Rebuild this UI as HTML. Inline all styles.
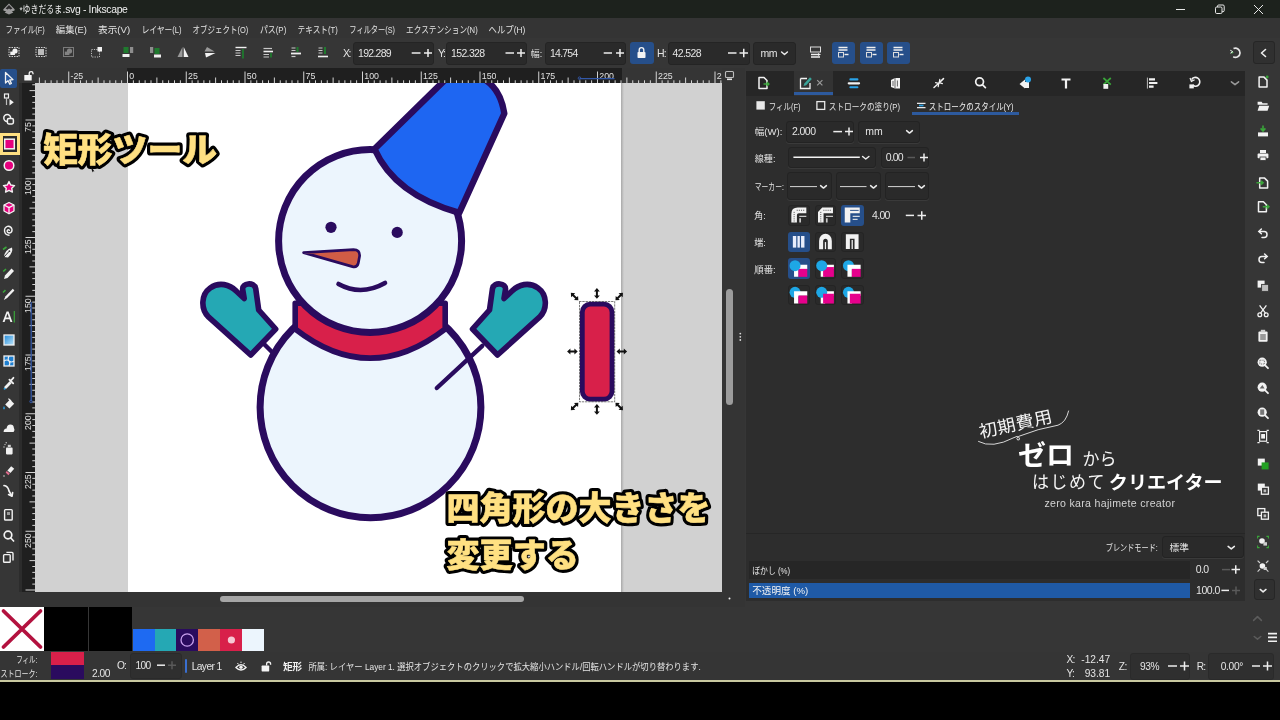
<!DOCTYPE html>
<html lang="ja"><head><meta charset="utf-8"><title>*ゆきだるま.svg - Inkscape</title>
<style>
html,body{margin:0;padding:0;background:#000;}
body{width:1280px;height:720px;overflow:hidden;position:relative;font-family:"Liberation Sans", sans-serif;}
#app{position:absolute;left:0;top:0;width:1280px;height:720px;overflow:hidden;background:#363636;opacity:0.9999;-webkit-font-smoothing:antialiased;filter:blur(0.45px);}
#app div,#app span{position:absolute;box-sizing:border-box;}
#app svg{position:absolute;left:0;top:0;}
#app svg text{font-family:"Liberation Sans","Noto Sans CJK JP",sans-serif;}
</style></head><body>
<div id="app">
<div style="left:0px;top:0px;width:1280px;height:18px;background:#1d221d;"></div>
<div style="left:0px;top:18px;width:1280px;height:20px;background:#343434;"></div>
<div style="left:0px;top:38px;width:1280px;height:30px;background:#363636;"></div>
<div style="left:0px;top:68px;width:20px;height:539px;background:#363636;"></div>
<div style="left:20px;top:68px;width:702px;height:15px;background:#353535;"></div>
<div style="left:126.5px;top:68px;width:495px;height:15px;background:#1f1f1f;"></div>
<div style="left:19px;top:83px;width:3.5px;height:509px;background:#2c2c2c;"></div>
<div style="left:22px;top:83px;width:13px;height:509px;background:#1f1f1f;"></div>
<div style="left:20px;top:68px;width:15px;height:15px;background:#353535;"></div>
<div style="left:35px;top:83px;width:687px;height:509px;background:#d1d1d1;"></div>
<div style="left:128px;top:83px;width:493px;height:509px;background:#ffffff;"></div>
<div style="left:621px;top:83px;width:3px;height:509px;background:linear-gradient(90deg,#a9a9a9,#d1d1d1);"></div>
<div style="left:722px;top:68px;width:23px;height:539px;background:#343434;"></div>
<div style="left:726px;top:289px;width:7px;height:116px;background:#9c9c9c;border-radius:3.5px;"></div>
<div style="left:20px;top:592px;width:702px;height:15px;background:#343434;"></div>
<div style="left:220px;top:596px;width:304px;height:6px;background:#a6a6a6;border-radius:3px;"></div>
<div style="left:745.5px;top:70.5px;width:499px;height:530.5px;background:#2d2d2d;"></div>
<div style="left:745.5px;top:70.5px;width:499px;height:25px;background:#262626;"></div>
<div style="left:745.5px;top:533px;width:499px;height:1px;background:#262626;"></div>
<div style="left:1250px;top:68px;width:30px;height:620px;background:#363636;"></div>
<div style="left:0px;top:607px;width:1250px;height:45px;background:#363636;"></div>
<div style="left:0px;top:652px;width:1280px;height:28px;background:#353535;"></div>
<div style="left:0px;top:680px;width:1280px;height:2px;background:#c9c9a0;"></div>
<div style="left:0px;top:682px;width:1280px;height:38px;background:#000;"></div>
<svg width="1280" height="720" viewBox="0 0 1280 720"><defs><clipPath id="cvclip"><rect x="35" y="83" width="687" height="509"/></clipPath><filter id="soft" x="-5%" y="-20%" width="110%" height="140%"><feGaussianBlur stdDeviation="0.6"/></filter></defs><g clip-path="url(#cvclip)" stroke-linejoin="round" stroke-linecap="round"><path d="M262 342 L277 357" stroke="#2a0b5e" stroke-width="4.4" fill="none"/><circle cx="370.5" cy="407.3" r="110.4" fill="#ecf5fd" stroke="#2a0b5e" stroke-width="7"/><path d="M295.2 303.3 L295.2 329 Q370 387.4 445.2 329 L445.2 303.3 Z" fill="#d8204a" stroke="#2a0b5e" stroke-width="5.6"/><circle cx="370.1" cy="241" r="91.5" fill="#ecf5fd" stroke="#2a0b5e" stroke-width="7"/><path d="M374.5 149 L449 76 L478 76 Q500 85 504.3 113.5 L459.3 212.8 Q395 195 374.5 149 Z" fill="#1e66f2" stroke="#2a0b5e" stroke-width="6.4"/><circle cx="331" cy="227.3" r="5.6" fill="#2a0b5e"/><circle cx="397.2" cy="232.4" r="5.6" fill="#2a0b5e"/><path d="M303.6 252.6 L353.5 249.6 Q360 249.6 359.6 256 L358.2 263.4 Q357.2 267.6 352.5 266.6 Z" fill="#d05c45" stroke="#2a0b5e" stroke-width="2.7"/><path d="M338.5 284 Q361 296.5 385 283" fill="none" stroke="#2a0b5e" stroke-width="4.6"/><path d="M497.5 355 L539.5 317.2 C547.8 309 547.2 294.5 538 288 C529 281.5 518.5 284.5 512 291 L504 298.5 L505.5 289.5 C506.5 283 494 281.5 492.5 288.5 L489.5 310 L472.5 329 Z" fill="#25a8b4" stroke="#2a0b5e" stroke-width="5.6"/><g transform="translate(748.2 0) scale(-1 1)"><path d="M497.5 355 L539.5 317.2 C547.8 309 547.2 294.5 538 288 C529 281.5 518.5 284.5 512 291 L504 298.5 L505.5 289.5 C506.5 283 494 281.5 492.5 288.5 L489.5 310 L472.5 329 Z" fill="#25a8b4" stroke="#2a0b5e" stroke-width="5.6"/></g><path d="M482.3 345.8 L436.8 388" stroke="#2a0b5e" stroke-width="4.4" fill="none"/><rect x="582.3" y="304.2" width="29.7" height="95" rx="8" ry="8" fill="#d8204a" stroke="#2a0b5e" stroke-width="4.8"/><rect x="579.5" y="301.5" width="35.2" height="100.3" fill="none" stroke="#222" stroke-width="0.6" stroke-dasharray="1.6 1.6"/><g transform="translate(574.6 296.6) rotate(45)" fill="#111" stroke="none"><path d="M-5.3 0 L-2.0 -2.9 L-2.0 -1 L2.0 -1 L2.0 -2.9 L5.3 0 L2.0 2.9 L2.0 1 L-2.0 1 L-2.0 2.9 Z"/></g><g transform="translate(596.9 293.4) rotate(90)" fill="#111" stroke="none"><path d="M-5.3 0 L-2.0 -2.9 L-2.0 -1 L2.0 -1 L2.0 -2.9 L5.3 0 L2.0 2.9 L2.0 1 L-2.0 1 L-2.0 2.9 Z"/></g><g transform="translate(619.2 296.6) rotate(-45)" fill="#111" stroke="none"><path d="M-5.3 0 L-2.0 -2.9 L-2.0 -1 L2.0 -1 L2.0 -2.9 L5.3 0 L2.0 2.9 L2.0 1 L-2.0 1 L-2.0 2.9 Z"/></g><g transform="translate(572.4 351.5) rotate(0)" fill="#111" stroke="none"><path d="M-5.3 0 L-2.0 -2.9 L-2.0 -1 L2.0 -1 L2.0 -2.9 L5.3 0 L2.0 2.9 L2.0 1 L-2.0 1 L-2.0 2.9 Z"/></g><g transform="translate(621.8 351.5) rotate(0)" fill="#111" stroke="none"><path d="M-5.3 0 L-2.0 -2.9 L-2.0 -1 L2.0 -1 L2.0 -2.9 L5.3 0 L2.0 2.9 L2.0 1 L-2.0 1 L-2.0 2.9 Z"/></g><g transform="translate(574.6 406.4) rotate(-45)" fill="#111" stroke="none"><path d="M-5.3 0 L-2.0 -2.9 L-2.0 -1 L2.0 -1 L2.0 -2.9 L5.3 0 L2.0 2.9 L2.0 1 L-2.0 1 L-2.0 2.9 Z"/></g><g transform="translate(596.9 409.4) rotate(90)" fill="#111" stroke="none"><path d="M-5.3 0 L-2.0 -2.9 L-2.0 -1 L2.0 -1 L2.0 -2.9 L5.3 0 L2.0 2.9 L2.0 1 L-2.0 1 L-2.0 2.9 Z"/></g><g transform="translate(619.2 406.4) rotate(45)" fill="#111" stroke="none"><path d="M-5.3 0 L-2.0 -2.9 L-2.0 -1 L2.0 -1 L2.0 -2.9 L5.3 0 L2.0 2.9 L2.0 1 L-2.0 1 L-2.0 2.9 Z"/></g></g><text x="43" y="161.5" font-size="34" font-weight="900" textLength="174" lengthAdjust="spacingAndGlyphs" fill="#000" stroke="#000" stroke-width="6.8" stroke-linejoin="round" filter="url(#soft)">矩形ツール</text><text x="43" y="161.5" font-size="34" font-weight="900" textLength="174" lengthAdjust="spacingAndGlyphs" fill="#ffe082" stroke="#ffe082" stroke-width="0.5" stroke-linejoin="round">矩形ツール</text><text x="446.5" y="520" font-size="32.5" font-weight="900" textLength="264" lengthAdjust="spacingAndGlyphs" fill="#000" stroke="#000" stroke-width="6.8" stroke-linejoin="round" filter="url(#soft)">四角形の大きさを</text><text x="446.5" y="520" font-size="32.5" font-weight="900" textLength="264" lengthAdjust="spacingAndGlyphs" fill="#ffe082" stroke="#ffe082" stroke-width="0.5" stroke-linejoin="round">四角形の大きさを</text><text x="446.5" y="567" font-size="32.5" font-weight="900" textLength="132.5" lengthAdjust="spacingAndGlyphs" fill="#000" stroke="#000" stroke-width="6.8" stroke-linejoin="round" filter="url(#soft)">変更する</text><text x="446.5" y="567" font-size="32.5" font-weight="900" textLength="132.5" lengthAdjust="spacingAndGlyphs" fill="#ffe082" stroke="#ffe082" stroke-width="0.5" stroke-linejoin="round">変更する</text></svg>
<span style="left:62.6px;top:4px;font-size:10.4px;color:#f0f0f0;line-height:11px;white-space:nowrap;letter-spacing:-0.329px;">.svg - Inkscape</span>
<span style="left:343px;top:47px;font-size:10.5px;color:#e4e4e4;line-height:12px;white-space:nowrap;letter-spacing:-1.460px;">X:</span>
<div style="left:352.5px;top:41.5px;width:81.19999999999999px;height:23.5px;background:#2a2a2a;border-radius:3px;border:1px solid #242424;"></div>
<span style="left:358px;top:47px;font-size:10.5px;color:#e4e4e4;line-height:12px;white-space:nowrap;letter-spacing:-0.708px;">192.289</span>
<span style="left:438px;top:47px;font-size:10.5px;color:#e4e4e4;line-height:12px;white-space:nowrap;letter-spacing:-1.460px;">Y:</span>
<div style="left:445.5px;top:41.5px;width:81.5px;height:23.5px;background:#2a2a2a;border-radius:3px;border:1px solid #242424;"></div>
<span style="left:451px;top:47px;font-size:10.5px;color:#e4e4e4;line-height:12px;white-space:nowrap;letter-spacing:-0.636px;">152.328</span>
<div style="left:544.5px;top:41.5px;width:81.5px;height:23.5px;background:#2a2a2a;border-radius:3px;border:1px solid #242424;"></div>
<span style="left:550px;top:47px;font-size:10.5px;color:#e4e4e4;line-height:12px;white-space:nowrap;letter-spacing:-0.769px;">14.754</span>
<div style="left:630px;top:41.7px;width:23.7px;height:22.6px;background:#264f8a;border-radius:3px;"></div>
<span style="left:657px;top:47px;font-size:10.5px;color:#e4e4e4;line-height:12px;white-space:nowrap;letter-spacing:-0.750px;">H:</span>
<div style="left:668px;top:41.5px;width:81.5px;height:23.5px;background:#2a2a2a;border-radius:3px;border:1px solid #242424;"></div>
<span style="left:672.5px;top:47px;font-size:10.5px;color:#e4e4e4;line-height:12px;white-space:nowrap;letter-spacing:-0.603px;">42.528</span>
<div style="left:753px;top:41.5px;width:43px;height:23.5px;background:#2a2a2a;border-radius:3px;border:1px solid #242424;"></div>
<span style="left:760.5px;top:47px;font-size:10.5px;color:#e4e4e4;line-height:12px;white-space:nowrap;letter-spacing:-0.497px;">mm</span>
<div style="left:832px;top:41.7px;width:22.6px;height:22.6px;background:#264f8a;border-radius:3px;"></div>
<div style="left:860px;top:41.7px;width:22.6px;height:22.6px;background:#264f8a;border-radius:3px;"></div>
<div style="left:887px;top:41.7px;width:22.6px;height:22.6px;background:#264f8a;border-radius:3px;"></div>
<div style="left:1252.5px;top:41px;width:22.5px;height:22.5px;background:#303030;border-radius:3px;border:1px solid #262626;"></div>
<span style="left:70.5px;top:71px;font-size:8.8px;color:#e0e0e0;line-height:10px;white-space:nowrap;">-25</span>
<span style="left:129.3px;top:71px;font-size:8.8px;color:#e0e0e0;line-height:10px;white-space:nowrap;">0</span>
<span style="left:188.1px;top:71px;font-size:8.8px;color:#e0e0e0;line-height:10px;white-space:nowrap;">25</span>
<span style="left:246.8px;top:71px;font-size:8.8px;color:#e0e0e0;line-height:10px;white-space:nowrap;">50</span>
<span style="left:305.6px;top:71px;font-size:8.8px;color:#e0e0e0;line-height:10px;white-space:nowrap;">75</span>
<span style="left:364.3px;top:71px;font-size:8.8px;color:#e0e0e0;line-height:10px;white-space:nowrap;">100</span>
<span style="left:423.1px;top:71px;font-size:8.8px;color:#e0e0e0;line-height:10px;white-space:nowrap;">125</span>
<span style="left:481.8px;top:71px;font-size:8.8px;color:#e0e0e0;line-height:10px;white-space:nowrap;">150</span>
<span style="left:540.5px;top:71px;font-size:8.8px;color:#e0e0e0;line-height:10px;white-space:nowrap;">175</span>
<span style="left:599.3px;top:71px;font-size:8.8px;color:#e0e0e0;line-height:10px;white-space:nowrap;">200</span>
<span style="left:658.0px;top:71px;font-size:8.8px;color:#e0e0e0;line-height:10px;white-space:nowrap;">225</span>
<span style="left:716.8px;top:71px;font-size:8.8px;color:#e0e0e0;line-height:10px;white-space:nowrap;">2</span>
<span style="left:24.4px;top:131.59px;font-size:8.8px;color:#e0e0e0;line-height:1;white-space:nowrap;transform-origin:0 0;transform:rotate(-90deg);">75</span>
<span style="left:24.4px;top:195.23px;font-size:8.8px;color:#e0e0e0;line-height:1;white-space:nowrap;transform-origin:0 0;transform:rotate(-90deg);">100</span>
<span style="left:24.4px;top:253.98px;font-size:8.8px;color:#e0e0e0;line-height:1;white-space:nowrap;transform-origin:0 0;transform:rotate(-90deg);">125</span>
<span style="left:24.4px;top:312.73px;font-size:8.8px;color:#e0e0e0;line-height:1;white-space:nowrap;transform-origin:0 0;transform:rotate(-90deg);">150</span>
<span style="left:24.4px;top:371.48px;font-size:8.8px;color:#e0e0e0;line-height:1;white-space:nowrap;transform-origin:0 0;transform:rotate(-90deg);">175</span>
<span style="left:24.4px;top:430.23px;font-size:8.8px;color:#e0e0e0;line-height:1;white-space:nowrap;transform-origin:0 0;transform:rotate(-90deg);">200</span>
<span style="left:24.4px;top:488.98px;font-size:8.8px;color:#e0e0e0;line-height:1;white-space:nowrap;transform-origin:0 0;transform:rotate(-90deg);">225</span>
<span style="left:24.4px;top:547.73px;font-size:8.8px;color:#e0e0e0;line-height:1;white-space:nowrap;transform-origin:0 0;transform:rotate(-90deg);">250</span>
<div style="left:0px;top:68.5px;width:16.5px;height:19.5px;background:#264f8a;border-radius:2px;"></div>
<div style="left:0px;top:133px;width:20px;height:22px;background:#2b2b2b;border:3px solid #ffe082;"></div>
<div style="left:793.7px;top:70.5px;width:39.5px;height:25px;background:#333333;"></div>
<div style="left:793.7px;top:91.6px;width:39.5px;height:3px;background:#2d5a9e;"></div>
<div style="left:912px;top:112px;width:106.8px;height:2.6px;background:#2d5a9e;"></div>
<div style="left:786.4px;top:120.5px;width:68.0px;height:22.5px;background:#2a2a2a;border-radius:3px;border:1px solid #232323;box-shadow:0 1px 0 #3a3a3a;"></div>
<span style="left:792px;top:125px;font-size:10.5px;color:#e4e4e4;line-height:12px;white-space:nowrap;letter-spacing:-0.575px;">2.000</span>
<div style="left:857.8px;top:120.5px;width:61.90000000000009px;height:22.5px;background:#2a2a2a;border-radius:3px;border:1px solid #232323;box-shadow:0 1px 0 #3a3a3a;"></div>
<span style="left:865.3px;top:125px;font-size:10.5px;color:#e4e4e4;line-height:12px;white-space:nowrap;letter-spacing:-0.147px;">mm</span>
<div style="left:788px;top:147px;width:87.5px;height:21px;background:#2a2a2a;border-radius:3px;border:1px solid #232323;box-shadow:0 1px 0 #3a3a3a;"></div>
<div style="left:881px;top:147px;width:48.39999999999998px;height:21px;background:#2a2a2a;border-radius:3px;border:1px solid #232323;box-shadow:0 1px 0 #3a3a3a;"></div>
<span style="left:885.8px;top:151px;font-size:10.5px;color:#e4e4e4;line-height:12px;white-space:nowrap;letter-spacing:-0.859px;">0.00</span>
<div style="left:787px;top:172px;width:45px;height:28px;background:#2a2a2a;border-radius:3px;border:1px solid #232323;box-shadow:0 1px 0 #3a3a3a;"></div>
<div style="left:836.4px;top:172px;width:44.200000000000045px;height:28px;background:#2a2a2a;border-radius:3px;border:1px solid #232323;box-shadow:0 1px 0 #3a3a3a;"></div>
<div style="left:884.8px;top:172px;width:44.200000000000045px;height:28px;background:#2a2a2a;border-radius:3px;border:1px solid #232323;box-shadow:0 1px 0 #3a3a3a;"></div>
<div style="left:788px;top:205px;width:21.700000000000045px;height:20.80000000000001px;background:#2a2a2a;border-radius:3px;border:1px solid #242424;"></div>
<div style="left:814.7px;top:205px;width:21.59999999999991px;height:20.80000000000001px;background:#2a2a2a;border-radius:3px;border:1px solid #242424;"></div>
<div style="left:840.8px;top:205px;width:22.90000000000009px;height:20.80000000000001px;background:#264f8a;border-radius:3px;"></div>
<span style="left:872px;top:209px;font-size:10.5px;color:#e4e4e4;line-height:12px;white-space:nowrap;letter-spacing:-0.684px;">4.00</span>
<div style="left:788px;top:231.7px;width:21.700000000000045px;height:20.80000000000001px;background:#264f8a;border-radius:3px;"></div>
<div style="left:814.7px;top:231.7px;width:21.59999999999991px;height:20.80000000000001px;background:#2a2a2a;border-radius:3px;border:1px solid #242424;"></div>
<div style="left:840.8px;top:231.7px;width:22.90000000000009px;height:20.80000000000001px;background:#2a2a2a;border-radius:3px;border:1px solid #242424;"></div>
<div style="left:788px;top:257.5px;width:21.700000000000045px;height:21.69999999999999px;background:#264f8a;border-radius:3px;"></div>
<div style="left:814.7px;top:257.5px;width:21.59999999999991px;height:21.69999999999999px;background:#2a2a2a;border-radius:3px;border:1px solid #242424;"></div>
<div style="left:840.8px;top:257.5px;width:22.90000000000009px;height:21.69999999999999px;background:#2a2a2a;border-radius:3px;border:1px solid #242424;"></div>
<div style="left:788px;top:284.7px;width:21.700000000000045px;height:20.69999999999999px;background:#2a2a2a;border-radius:3px;border:1px solid #242424;"></div>
<div style="left:814.7px;top:284.7px;width:21.59999999999991px;height:20.69999999999999px;background:#2a2a2a;border-radius:3px;border:1px solid #242424;"></div>
<div style="left:840.8px;top:284.7px;width:22.90000000000009px;height:20.69999999999999px;background:#2a2a2a;border-radius:3px;border:1px solid #242424;"></div>
<span style="left:1044.4px;top:497px;font-size:10.6px;color:#d4d4d4;line-height:12px;white-space:nowrap;letter-spacing:0.303px;">zero kara hajimete creator</span>
<div style="left:1162px;top:536px;width:81.59999999999991px;height:22.200000000000045px;background:#2a2a2a;border-radius:3px;border:1px solid #232323;box-shadow:0 1px 0 #3a3a3a;"></div>
<div style="left:749px;top:560.6px;width:441px;height:18.8px;background:#262626;"></div>
<span style="left:1195.8px;top:563px;font-size:10.5px;color:#e4e4e4;line-height:12px;white-space:nowrap;letter-spacing:-0.599px;">0.0</span>
<div style="left:749px;top:582.8px;width:441px;height:15.4px;background:#1f5aa6;"></div>
<span style="left:1196px;top:584px;font-size:10.5px;color:#e4e4e4;line-height:12px;white-space:nowrap;letter-spacing:-0.455px;">100.0</span>
<div style="left:1253.7px;top:579.4px;width:21.7px;height:20.8px;background:#303030;border-radius:3px;border:1px solid #262626;"></div>
<div style="left:0px;top:607px;width:44px;height:44px;background:#ffffff;"></div>
<div style="left:44.4px;top:607px;width:43.8px;height:44px;background:#000;"></div>
<div style="left:88.8px;top:607px;width:43.4px;height:44px;background:#000;"></div>
<div style="left:132.6px;top:629px;width:22.0px;height:22.2px;background:#1e6af2;"></div>
<div style="left:154.6px;top:629px;width:21.599999999999994px;height:22.2px;background:#25a8b4;"></div>
<div style="left:176.2px;top:629px;width:22.0px;height:22.2px;background:#2a0b5e;"></div>
<div style="left:198.2px;top:629px;width:22.200000000000017px;height:22.2px;background:#d2604a;"></div>
<div style="left:220.4px;top:629px;width:22.0px;height:22.2px;background:#d8204a;"></div>
<div style="left:242.4px;top:629px;width:21.799999999999983px;height:22.2px;background:#ecf5fd;"></div>
<div style="left:50.8px;top:652.4px;width:33.4px;height:13px;background:#d8204a;"></div>
<div style="left:50.8px;top:665.4px;width:33.4px;height:13.8px;background:#2a0b5e;"></div>
<span style="left:92px;top:668px;font-size:10.2px;color:#e4e4e4;line-height:11px;white-space:nowrap;letter-spacing:-0.463px;">2.00</span>
<span style="left:117px;top:660px;font-size:10.2px;color:#e4e4e4;line-height:11px;white-space:nowrap;letter-spacing:-0.884px;">O:</span>
<div style="left:130px;top:653px;width:52px;height:26px;background:#2f2f2f;border-radius:3px;border:1px solid #2a2a2a;"></div>
<span style="left:135.5px;top:660px;font-size:10.2px;color:#e4e4e4;line-height:11px;white-space:nowrap;letter-spacing:-0.673px;">100</span>
<div style="left:185px;top:659px;width:2.2px;height:13.6px;background:#3a6fd0;border-radius:1px;"></div>
<span style="left:191.7px;top:661px;font-size:10.2px;color:#e4e4e4;line-height:11px;white-space:nowrap;letter-spacing:-0.575px;">Layer 1</span>
<span style="left:1066.4px;top:654px;font-size:10.2px;color:#e4e4e4;line-height:11px;white-space:nowrap;letter-spacing:-0.719px;">X:</span>
<span style="right:169.79999999999995px;text-align:right;top:654px;font-size:10.2px;color:#e4e4e4;line-height:11px;white-space:nowrap;">-12.47</span>
<span style="left:1066.4px;top:668px;font-size:10.2px;color:#e4e4e4;line-height:11px;white-space:nowrap;letter-spacing:-0.719px;">Y:</span>
<span style="right:169.79999999999995px;text-align:right;top:668px;font-size:10.2px;color:#e4e4e4;line-height:11px;white-space:nowrap;">93.81</span>
<span style="left:1118.8px;top:661px;font-size:10.2px;color:#e4e4e4;line-height:11px;white-space:nowrap;letter-spacing:-0.432px;">Z:</span>
<div style="left:1130px;top:653px;width:60px;height:27px;background:#2f2f2f;border-radius:3px;border:1px solid #2a2a2a;"></div>
<span style="left:1140px;top:661px;font-size:10.2px;color:#e4e4e4;line-height:11px;white-space:nowrap;letter-spacing:-0.472px;">93%</span>
<span style="left:1196.8px;top:661px;font-size:10.2px;color:#e4e4e4;line-height:11px;white-space:nowrap;letter-spacing:-1.000px;">R:</span>
<div style="left:1208px;top:653px;width:66px;height:27px;background:#2f2f2f;border-radius:3px;border:1px solid #2a2a2a;"></div>
<span style="left:1220.8px;top:661px;font-size:10.2px;color:#e4e4e4;line-height:11px;white-space:nowrap;letter-spacing:-0.346px;">0.00°</span>
<svg width="1280" height="720" viewBox="0 0 1280 720">
<g><path d="M9 3.6 L14.6 9.2 Q15.2 10.2 14 10.8 L11.8 11.6 L13.4 12.6 L9 14.4 L4.6 12.6 L6.2 11.6 L4 10.8 Q2.8 10.2 3.4 9.2 Z" fill="#9c9c9c"/><path d="M9 5 L12.4 8.4 L10.4 9.4 L9 8.6 L7.6 9.4 L5.6 8.4 Z" fill="#2a2a2a"/></g>
<text x="19.5" y="12.5" font-size="9.8" textLength="42.6" lengthAdjust="spacingAndGlyphs" fill="#f0f0f0">*ゆきだるま</text>
<g stroke="#e8e8e8" stroke-width="1" fill="none"><path d="M1176 9.5 H1185"/><rect x="1215.5" y="7" width="6.5" height="6.5" rx="1.2"/><path d="M1217.5 7 V6.2 Q1217.5 5 1218.7 5 H1223 Q1224.2 5 1224.2 6.2 V10.5 Q1224.2 11.7 1223 11.7 H1222"/><path d="M1254 5 L1263 14 M1263 5 L1254 14"/></g>
<text x="5.5" y="33.4" font-size="9.6" textLength="39.3" lengthAdjust="spacingAndGlyphs" fill="#e2e2e2">ファイル(F)</text>
<text x="55.8" y="33.4" font-size="9.6" textLength="31.1" lengthAdjust="spacingAndGlyphs" fill="#e2e2e2">編集(E)</text>
<text x="98" y="33.4" font-size="9.6" textLength="32.2" lengthAdjust="spacingAndGlyphs" fill="#e2e2e2">表示(V)</text>
<text x="141.8" y="33.4" font-size="9.6" textLength="39.8" lengthAdjust="spacingAndGlyphs" fill="#e2e2e2">レイヤー(L)</text>
<text x="192.5" y="33.4" font-size="9.6" textLength="55.8" lengthAdjust="spacingAndGlyphs" fill="#e2e2e2">オブジェクト(O)</text>
<text x="259.9" y="33.4" font-size="9.6" textLength="26.4" lengthAdjust="spacingAndGlyphs" fill="#e2e2e2">パス(P)</text>
<text x="297.6" y="33.4" font-size="9.6" textLength="40.1" lengthAdjust="spacingAndGlyphs" fill="#e2e2e2">テキスト(T)</text>
<text x="349.3" y="33.4" font-size="9.6" textLength="45.7" lengthAdjust="spacingAndGlyphs" fill="#e2e2e2">フィルター(S)</text>
<text x="406.1" y="33.4" font-size="9.6" textLength="71.6" lengthAdjust="spacingAndGlyphs" fill="#e2e2e2">エクステンション(N)</text>
<text x="488.6" y="33.4" font-size="9.6" textLength="36.8" lengthAdjust="spacingAndGlyphs" fill="#e2e2e2">ヘルプ(H)</text>
<g transform="translate(8.5 47)"><rect x="0.5" y="0.5" width="10" height="9" fill="none" stroke="#cfcfcf" stroke-width="1" stroke-dasharray="1.5 1"/><circle cx="6.5" cy="4" r="2.6" fill="#f2f2f2"/><rect x="1.8" y="4.6" width="4.6" height="3.4" fill="#f2f2f2"/></g>
<g transform="translate(35.5 47)"><rect x="0.5" y="0.5" width="10" height="9" fill="none" stroke="#cfcfcf" stroke-width="1" stroke-dasharray="1.5 1"/><path d="M2.5 3 H8.5 M2.5 5 H8.5 M2.5 7 H8.5" stroke="#e8e8e8" stroke-width="1.3"/></g>
<g transform="translate(63 47)" opacity="0.45"><rect x="0.5" y="0.5" width="10" height="9" fill="none" stroke="#cfcfcf" stroke-width="1"/><circle cx="6.5" cy="4" r="2.6" fill="#e0e0e0"/><rect x="1.8" y="4.6" width="4.6" height="3.4" fill="#e0e0e0"/></g>
<g transform="translate(91 46.5)"><rect x="0.5" y="3" width="8" height="7.5" fill="none" stroke="#bdbdbd" stroke-width="1" stroke-dasharray="1.2 1.2"/><rect x="6.5" y="0.5" width="4.5" height="4.5" fill="#f2f2f2"/></g>
<g transform="translate(122 46.5)"><rect x="1.5" y="0.5" width="5" height="6" fill="#1f7a2e"/><rect x="8" y="0.5" width="3.2" height="6" fill="#8d8d8d"/><rect x="0.5" y="7.5" width="7" height="3" fill="#f0f0f0"/></g>
<g transform="translate(149.5 46.5)"><rect x="0.5" y="0.5" width="3.2" height="6" fill="#8d8d8d"/><rect x="5" y="1.5" width="5" height="6" fill="#1f7a2e"/><rect x="4.5" y="8" width="7" height="3" fill="#f0f0f0"/></g>
<g transform="translate(177.5 47)"><path d="M5 0 L5 10 L0 10 Z" fill="#9a9a9a"/><path d="M6.2 0 L11 10 L6.2 10 Z" fill="#f2f2f2"/></g>
<g transform="translate(204.5 47)"><path d="M0 4.6 L10 4.6 L2.5 0 Z" fill="#9a9a9a"/><path d="M0.5 6 L11 6 L1.5 10.5 Z" fill="#f2f2f2"/></g>
<g transform="translate(235.5 46.5)"><path d="M0 1 H11" stroke="#f0f0f0" stroke-width="1.4"/><path d="M0 4 H5 M0 6.5 H5 M0 9 H5" stroke="#c8c8c8" stroke-width="1.2"/><path d="M7.5 2.5 V12" stroke="#1f7a2e" stroke-width="1.8"/></g>
<g transform="translate(263 46.5)"><path d="M0.5 2 H9 " stroke="#c8c8c8" stroke-width="1.2"/><path d="M0.5 5 H10" stroke="#f0f0f0" stroke-width="1.6"/><path d="M0.5 8 H6 M0.5 10.5 H6" stroke="#c8c8c8" stroke-width="1.2"/><path d="M8 6.5 V11" stroke="#1f7a2e" stroke-width="1.8"/></g>
<g transform="translate(290.5 46.5)"><path d="M1 1.5 H5 M1 4 H5" stroke="#c8c8c8" stroke-width="1.2"/><path d="M7 0.5 V5.5" stroke="#1f7a2e" stroke-width="2"/><path d="M0.5 7 H10.5" stroke="#f0f0f0" stroke-width="1.8"/><path d="M1 10 H5" stroke="#c8c8c8" stroke-width="1.2"/></g>
<g transform="translate(317.5 46.5)"><path d="M1 1.5 H5 M1 4 H5 M1 6.5 H5" stroke="#c8c8c8" stroke-width="1.2"/><path d="M7.5 0.5 V7.5" stroke="#1f7a2e" stroke-width="2"/><path d="M0.5 10 H10.5" stroke="#f0f0f0" stroke-width="1.6"/></g>
<path d="M411.7 53 H420.5" stroke="#ededed" stroke-width="1.5"/>
<path d="M424 53 H432 M428.0 49.0 V57.0" stroke="#ededed" stroke-width="1.5"/>
<path d="M505.5 53 H514" stroke="#ededed" stroke-width="1.5"/>
<path d="M517 53 H525 M521.0 49.0 V57.0" stroke="#ededed" stroke-width="1.5"/>
<text x="530.8" y="57" font-size="9.6" textLength="11.4" lengthAdjust="spacingAndGlyphs" fill="#e4e4e4">幅:</text>
<path d="M603.7 53 H612" stroke="#ededed" stroke-width="1.5"/>
<path d="M616 53 H624 M620.0 49.0 V57.0" stroke="#ededed" stroke-width="1.5"/>
<g><rect x="637.5" y="52" width="8" height="6" rx="0.8" fill="#f4f4f4"/><path d="M639.2 52 V50 Q639.2 47.6 641.5 47.6 Q643.8 47.6 643.8 50 V52" fill="none" stroke="#f4f4f4" stroke-width="1.4"/></g>
<path d="M728 53 H736.5" stroke="#ededed" stroke-width="1.5"/>
<path d="M739.5 53 H748 M743.75 48.75 V57.25" stroke="#ededed" stroke-width="1.5"/>
<path d="M781.6 52.043000000000006 L784.5 54.456999999999994 L787.4 52.043000000000006" stroke="#ededed" stroke-width="1.5" fill="none" stroke-linecap="round" stroke-linejoin="round"/>
<g transform="translate(810 46.5)"><rect x="0.5" y="0.5" width="10" height="5" fill="none" stroke="#dcdcdc" stroke-width="1"/><path d="M1 8 H8 M1 10.5 H10" stroke="#f0f0f0" stroke-width="1.6"/><path d="M8 6.5 L11 8 L8 9.5Z" fill="#f0f0f0"/></g>
<g transform="translate(837.5 46.5)"><path d="M1 1 H10 M1 3.5 H10" stroke="#f0f0f0" stroke-width="1.3"/><rect x="1" y="6" width="5" height="4.5" fill="none" stroke="#dcdcdc" stroke-width="1"/><path d="M7 8 H11" stroke="#f0f0f0" stroke-width="1.4"/></g>
<g transform="translate(865.5 46.5)"><path d="M1 1 H10 M1 3.5 H10" stroke="#f0f0f0" stroke-width="1.3"/><rect x="1" y="6" width="5" height="4.5" fill="none" stroke="#dcdcdc" stroke-width="1"/><path d="M7 8 H11" stroke="#f0f0f0" stroke-width="1.4"/></g>
<g transform="translate(892.5 46.5)"><path d="M1 1 H10 M1 3.5 H10" stroke="#f0f0f0" stroke-width="1.3"/><rect x="1" y="6" width="5" height="4.5" fill="none" stroke="#dcdcdc" stroke-width="1"/><path d="M7 8 H11" stroke="#f0f0f0" stroke-width="1.4"/></g>
<g><path d="M1233.5 48.6 A4.6 4.6 0 1 1 1233.2 56.8" fill="none" stroke="#e6e6e6" stroke-width="1.7"/><path d="M1231.2 51 L1233.8 52.6 L1231.4 54 Z" fill="#4caf50"/><path d="M1230.2 50.2 l2.6 1.4 l-2.4 1.6" fill="none" stroke="#e6e6e6" stroke-width="1"/></g>
<path d="M1265.5 49.5 L1261.5 53 L1265.5 56.5" stroke="#f0f0f0" stroke-width="1.6" fill="none" stroke-linecap="round" stroke-linejoin="round"/>
<path d="M39.38 83 V77.5M45.25 83 V80.3M51.12 83 V80.3M57.00 83 V80.3M62.88 83 V80.3M68.75 83 V71.5M74.62 83 V80.3M80.50 83 V80.3M86.38 83 V80.3M92.25 83 V80.3M98.12 83 V77.5M104.00 83 V80.3M109.88 83 V80.3M115.75 83 V80.3M121.62 83 V80.3M127.50 83 V71.5M133.38 83 V80.3M139.25 83 V80.3M145.12 83 V80.3M151.00 83 V80.3M156.88 83 V77.5M162.75 83 V80.3M168.62 83 V80.3M174.50 83 V80.3M180.38 83 V80.3M186.25 83 V71.5M192.12 83 V80.3M198.00 83 V80.3M203.88 83 V80.3M209.75 83 V80.3M215.62 83 V77.5M221.50 83 V80.3M227.38 83 V80.3M233.25 83 V80.3M239.12 83 V80.3M245.00 83 V71.5M250.88 83 V80.3M256.75 83 V80.3M262.62 83 V80.3M268.50 83 V80.3M274.38 83 V77.5M280.25 83 V80.3M286.12 83 V80.3M292.00 83 V80.3M297.88 83 V80.3M303.75 83 V71.5M309.62 83 V80.3M315.50 83 V80.3M321.38 83 V80.3M327.25 83 V80.3M333.12 83 V77.5M339.00 83 V80.3M344.88 83 V80.3M350.75 83 V80.3M356.62 83 V80.3M362.50 83 V71.5M368.38 83 V80.3M374.25 83 V80.3M380.12 83 V80.3M386.00 83 V80.3M391.88 83 V77.5M397.75 83 V80.3M403.62 83 V80.3M409.50 83 V80.3M415.38 83 V80.3M421.25 83 V71.5M427.12 83 V80.3M433.00 83 V80.3M438.88 83 V80.3M444.75 83 V80.3M450.62 83 V77.5M456.50 83 V80.3M462.38 83 V80.3M468.25 83 V80.3M474.12 83 V80.3M480.00 83 V71.5M485.88 83 V80.3M491.75 83 V80.3M497.62 83 V80.3M503.50 83 V80.3M509.38 83 V77.5M515.25 83 V80.3M521.12 83 V80.3M527.00 83 V80.3M532.88 83 V80.3M538.75 83 V71.5M544.62 83 V80.3M550.50 83 V80.3M556.38 83 V80.3M562.25 83 V80.3M568.12 83 V77.5M574.00 83 V80.3M579.88 83 V80.3M585.75 83 V80.3M591.62 83 V80.3M597.50 83 V71.5M603.38 83 V80.3M609.25 83 V80.3M615.12 83 V80.3M621.00 83 V80.3M626.88 83 V77.5M632.75 83 V80.3M638.62 83 V80.3M644.50 83 V80.3M650.38 83 V80.3M656.25 83 V71.5M662.12 83 V80.3M668.00 83 V80.3M673.88 83 V80.3M679.75 83 V80.3M685.62 83 V77.5M691.50 83 V80.3M697.38 83 V80.3M703.25 83 V80.3M709.12 83 V80.3M715.00 83 V71.5M720.88 83 V80.3" stroke="#e8e8e8" stroke-width="0.9" fill="none"/>
<path d="M35 84.75 H32.3M35 90.62 H29.5M35 96.50 H32.3M35 102.38 H32.3M35 108.25 H32.3M35 114.12 H32.3M35 120.00 H25.5M35 125.88 H32.3M35 131.75 H32.3M35 137.62 H32.3M35 143.50 H32.3M35 149.38 H29.5M35 155.25 H32.3M35 161.12 H32.3M35 167.00 H32.3M35 172.88 H32.3M35 178.75 H25.5M35 184.62 H32.3M35 190.50 H32.3M35 196.38 H32.3M35 202.25 H32.3M35 208.12 H29.5M35 214.00 H32.3M35 219.88 H32.3M35 225.75 H32.3M35 231.62 H32.3M35 237.50 H25.5M35 243.38 H32.3M35 249.25 H32.3M35 255.12 H32.3M35 261.00 H32.3M35 266.88 H29.5M35 272.75 H32.3M35 278.62 H32.3M35 284.50 H32.3M35 290.38 H32.3M35 296.25 H25.5M35 302.12 H32.3M35 308.00 H32.3M35 313.88 H32.3M35 319.75 H32.3M35 325.62 H29.5M35 331.50 H32.3M35 337.38 H32.3M35 343.25 H32.3M35 349.12 H32.3M35 355.00 H25.5M35 360.88 H32.3M35 366.75 H32.3M35 372.62 H32.3M35 378.50 H32.3M35 384.38 H29.5M35 390.25 H32.3M35 396.12 H32.3M35 402.00 H32.3M35 407.88 H32.3M35 413.75 H25.5M35 419.62 H32.3M35 425.50 H32.3M35 431.38 H32.3M35 437.25 H32.3M35 443.12 H29.5M35 449.00 H32.3M35 454.88 H32.3M35 460.75 H32.3M35 466.62 H32.3M35 472.50 H25.5M35 478.38 H32.3M35 484.25 H32.3M35 490.12 H32.3M35 496.00 H32.3M35 501.88 H29.5M35 507.75 H32.3M35 513.62 H32.3M35 519.50 H32.3M35 525.38 H32.3M35 531.25 H25.5M35 537.12 H32.3M35 543.00 H32.3M35 548.88 H32.3M35 554.75 H32.3M35 560.62 H29.5M35 566.50 H32.3M35 572.38 H32.3M35 578.25 H32.3M35 584.12 H32.3M35 590.00 H25.5" stroke="#e8e8e8" stroke-width="0.9" fill="none"/>
<path d="M579.5 78.6 H614.5" stroke="#3358a8" stroke-width="1.3"/><circle cx="579.5" cy="78.2" r="1.3" fill="none" stroke="#3358a8" stroke-width="0.9"/>
<path d="M31.2 302 V401.5" stroke="#3358a8" stroke-width="1.3"/><circle cx="31" cy="401.5" r="1.3" fill="none" stroke="#3358a8" stroke-width="0.9"/>
<g><rect x="24.3" y="75" width="7.4" height="5.6" rx="0.6" fill="#f4f4f4"/><path d="M29.2 75 V73.4 Q29.2 71.6 31.2 71.6 Q33 71.6 33 73.4 V74.2" fill="none" stroke="#f4f4f4" stroke-width="1.3"/></g>
<g><rect x="725.5" y="71.5" width="8" height="6" rx="1" fill="none" stroke="#bdbdbd" stroke-width="1.1"/><path d="M727 79.3 H732" stroke="#e8e8e8" stroke-width="1.6"/></g>
<g fill="#d8d8d8"><circle cx="740.3" cy="333.6" r="0.9"/><circle cx="740.3" cy="336.8" r="0.9"/><circle cx="740.3" cy="340" r="0.9"/></g>
<circle cx="729.5" cy="598.6" r="1" fill="#f0f0f0"/>
<path d="M5.5 72.5 L5.5 83 L8 80.6 L9.8 84.2 L11.4 83.4 L9.7 80 L13 79.6 Z" fill="#2a5aa0" stroke="#f2f2f2" stroke-width="1.3" stroke-linejoin="round"/>
<g><rect x="4.5" y="94" width="4" height="4" fill="none" stroke="#f2f2f2" stroke-width="1.2"/><path d="M6.5 98 V105" stroke="#bdbdbd" stroke-width="1.2"/><path d="M9.5 99 L9.5 105.5 L13.8 102.3 Z" fill="#f2f2f2"/></g>
<g fill="none" stroke="#f2f2f2" stroke-width="1.5"><circle cx="7.2" cy="118" r="3.4"/><rect x="7.4" y="118.6" width="6" height="5.4" rx="1.4" fill="#383838"/></g>
<rect x="4.7" y="139.2" width="9.6" height="9.6" fill="#e6007e" stroke="#f2f2f2" stroke-width="1.5"/>
<circle cx="9" cy="165.5" r="4.8" fill="#e6007e" stroke="#f2f2f2" stroke-width="1.5"/>
<path d="M9.00 181.60 L10.70 185.05 L14.52 185.61 L11.76 188.30 L12.41 192.09 L9.00 190.30 L5.59 192.09 L6.24 188.30 L3.48 185.61 L7.30 185.05 Z" fill="#e6007e" stroke="#f2f2f2" stroke-width="1.4" stroke-linejoin="round"/>
<g stroke="#f2f2f2" stroke-width="1.3" stroke-linejoin="round" fill="#e6007e"><path d="M9 202.5 L14 205 L14 211 L9 213.8 L4 211 L4 205 Z"/><path d="M4 205 L9 207.6 L14 205 M9 207.6 V213.8" fill="none"/></g>
<path d="M9.4 230.2 Q8 229 7.2 230.6 Q6.8 232.8 9.4 233 Q12.4 232.6 12 229.4 Q11 225.8 7.4 226.4 Q4 227.6 4.6 231.6 Q5.4 235 9 235.2" fill="none" stroke="#f2f2f2" stroke-width="1.4" stroke-linecap="round"/>
<g><path d="M4 257 Q4.5 250 12 247.5 Q13.5 252 8 257.5 Z" fill="#f2f2f2"/><path d="M4 257 L9 251.5" stroke="#383838" stroke-width="1"/><path d="M3 249.5 L6.5 247" stroke="#3aa53a" stroke-width="1.6"/><circle cx="9.4" cy="251.2" r="0.9" fill="#383838"/></g>
<g><path d="M4 279 L5 275.5 L11.5 268.5 L14 271 L7.5 278 Z" fill="#f2f2f2"/><path d="M3.2 271.5 L6 269" stroke="#3aa53a" stroke-width="1.6"/></g>
<g><path d="M3.8 300 L5.6 296.2 L12.8 288.8 L14.4 290.4 L7.2 298 Z" fill="#f2f2f2"/><path d="M3 292.5 L5.5 290.2" stroke="#3aa53a" stroke-width="1.6"/></g>
<g><path d="M2.6 322 L6.6 311.5 L8.6 311.5 L12.4 322 L10.4 322 L9.5 319.3 L5.5 319.3 L4.6 322 Z M6.1 317.6 L8.9 317.6 L7.5 313.6 Z" fill="#f2f2f2" fill-rule="evenodd"/><path d="M14.3 311 V322.6" stroke="#3aa53a" stroke-width="1.2"/></g>
<defs><linearGradient id="gr1" x1="0" y1="0" x2="1" y2="1"><stop offset="0" stop-color="#1e88d8"/><stop offset="1" stop-color="#bfe6fb"/></linearGradient></defs><rect x="4" y="335" width="10" height="10" fill="url(#gr1)" stroke="#f2f2f2" stroke-width="1.3"/>
<g><rect x="4" y="356" width="10" height="10" fill="#1e7fd0" stroke="#f2f2f2" stroke-width="1.3"/><path d="M4 361 Q7 359 9 361 T14 361 M9 356 Q7.4 359 9 361 T9 366" stroke="#f2f2f2" stroke-width="1.1" fill="none"/></g>
<g><path d="M4 389 L4.6 386.4 L9.6 381.2 L11.6 383.2 L6.6 388.4 Z" fill="#f2f2f2"/><path d="M9.4 379.6 L13.2 383.4 M10.6 381 L13.4 377.8" stroke="#f2f2f2" stroke-width="1.8" stroke-linecap="round"/><circle cx="4.6" cy="388.8" r="1" fill="#2aa3e8"/></g>
<g><path d="M5.2 404.5 L10 399.6 L14.2 403.8 L9.4 408.6 Z" fill="#f2f2f2"/><path d="M8.4 398.6 L11 401" stroke="#f2f2f2" stroke-width="1.2"/><path d="M4 406 Q2.4 408.6 4 409.4 Q5.6 408.6 4 406 Z" fill="#2aa3e8"/></g>
<path d="M3.6 432 Q3.6 428.4 6.6 428.4 Q7 424.6 10.4 424.4 Q13.6 424.4 13.8 427.6 Q15.2 429.8 13.6 432 Z" fill="#f2f2f2"/>
<g><rect x="6" y="447.6" width="6.6" height="6.8" rx="0.8" fill="#f2f2f2"/><rect x="7.8" y="444.8" width="3" height="2.2" fill="#cfcfcf"/><circle cx="5" cy="444.6" r="0.7" fill="#cfcfcf"/><circle cx="4" cy="447" r="0.7" fill="#cfcfcf"/><circle cx="6.2" cy="442.8" r="0.7" fill="#cfcfcf"/></g>
<g><path d="M7.4 470.4 L11.2 466.2 L14.2 468.8 L10.4 473 Z" fill="#f2f2f2"/><path d="M6.8 471 L9.8 473.6 L8.4 475.2 L5.6 472.6 Z" fill="#e06a8c"/><circle cx="4" cy="476" r="0.8" fill="#cfcfcf"/></g>
<g fill="none" stroke="#f2f2f2" stroke-width="1.7" stroke-linecap="round" stroke-linejoin="round"><path d="M4 485.5 Q8 486 9 491 L11.6 495.6"/><path d="M8.6 494.6 L12 496.2 L12.6 492.6"/></g>
<g><rect x="4.6" y="509.6" width="7.6" height="10.4" rx="0.8" fill="none" stroke="#f2f2f2" stroke-width="1.4"/><path d="M7 512 H10 V515 H7Z" fill="#9a9a9a"/></g>
<g fill="none" stroke="#f2f2f2" stroke-width="1.7" stroke-linecap="round"><circle cx="8" cy="535" r="3.8"/><path d="M10.8 538 L13.6 541"/></g>
<g fill="none" stroke="#f2f2f2" stroke-width="1.4" stroke-linejoin="round"><rect x="3.6" y="554.6" width="6.6" height="7.6" rx="0.8"/><path d="M6.4 552.4 H12 Q13 552.4 13 553.4 V560.6"/></g>
<g><path d="M759 77.5 H764 L767 80.5 V88.5 H759 Z" fill="none" stroke="#f2f2f2" stroke-width="1.5" stroke-linejoin="round"/><path d="M763.5 84 H768.6 M766.8 82 L769 84 L766.8 86" stroke="#3aa53a" stroke-width="1.3" fill="none"/></g>
<g><path d="M800.5 78.5 H807 M800.5 78.5 V88.5 H810 V83" fill="none" stroke="#f2f2f2" stroke-width="1.3"/><path d="M803.5 86 L804.4 83.4 L810 77.2 L811.8 79 L806.2 85.2 Z" fill="#3aa59a"/></g>
<path d="M817.2 80.2 L822.4 85.4 M822.4 80.2 L817.2 85.4" stroke="#9a9a9a" stroke-width="1.2"/>
<g stroke-linecap="round"><path d="M850.4 79.4 H857.4 M850.4 87.2 H857.4" stroke="#2aa3e8" stroke-width="2.1"/><path d="M848.8 83.3 H859" stroke="#f2f2f2" stroke-width="2.3"/></g>
<g><path d="M891 80 L895 78 L900 78 V88.5 H895 L891 87 Z" fill="#f2f2f2"/><path d="M895 78 V88.5 M893 81 V86 M897.4 80.5 V86.5" stroke="#555" stroke-width="0.9"/></g>
<g stroke="#f2f2f2" stroke-width="1.5" fill="none" stroke-linecap="round"><path d="M934 87.5 L938.5 83.5 M943.5 78.6 L939.5 82.4"/><path d="M935.6 82.6 L938.8 83.4 L938.2 86.6 M942.4 83.6 L939.2 82.6 L939.8 79.4" stroke-width="1.2"/></g>
<g fill="none" stroke="#f2f2f2" stroke-width="1.7" stroke-linecap="round"><circle cx="979.6" cy="81.8" r="3.9"/><path d="M982.6 84.8 L985.4 87.6"/></g>
<g><path d="M1019.5 84 L1025 79.5 V82 H1029 V88 H1025 V88.6 Z" fill="#f2f2f2"/><circle cx="1028" cy="79.6" r="3" fill="#2aa3e8"/></g>
<path d="M1061.5 78.4 H1070.5 V80.4 H1067.1 V88.4 H1064.9 V80.4 H1061.5 Z" fill="#f2f2f2"/>
<g><path d="M1103.4 78 L1110.8 84.6 M1110.8 78 L1103.4 84.6" stroke="#3aa53a" stroke-width="1.7"/><rect x="1103.4" y="84" width="4.8" height="4.8" fill="#f2f2f2"/></g>
<g><path d="M1147.4 77.6 V88.6" stroke="#bdbdbd" stroke-width="1"/><path d="M1149 79.4 H1155 M1149 83 H1157.4 M1149 86.6 H1153.6" stroke="#f2f2f2" stroke-width="2.2"/></g>
<g><path d="M1192.6 85.2 A4.4 4.4 0 1 0 1191.6 79.6" fill="none" stroke="#f2f2f2" stroke-width="1.6"/><path d="M1190 78 L1191.4 81.4 L1194.6 79.8" fill="none" stroke="#f2f2f2" stroke-width="1.2"/><rect x="1189.4" y="84.4" width="4.4" height="4" fill="#f2f2f2"/></g>
<path d="M1231.3999999999999 81.81199999999995 L1235.0 84.68800000000005 L1238.6000000000001 81.81199999999995" stroke="#9a9a9a" stroke-width="1.5" fill="none" stroke-linecap="round" stroke-linejoin="round"/>
<rect x="756.4" y="101.2" width="8.4" height="8.4" fill="#e8e8e8"/>
<text x="768.8" y="109.6" font-size="9.2" textLength="31.6" lengthAdjust="spacingAndGlyphs" fill="#e4e4e4">フィル(F)</text>
<rect x="816.9" y="101.6" width="7.8" height="7.8" fill="none" stroke="#e8e8e8" stroke-width="1.3"/>
<text x="828.8" y="109.6" font-size="9.2" textLength="71.2" lengthAdjust="spacingAndGlyphs" fill="#e4e4e4">ストロークの塗り(P)</text>
<g><path d="M917 103.4 H925.5 M917 107.6 H925.5" stroke="#e8e8e8" stroke-width="1.3"/><path d="M919 105.5 H923.5" stroke="#2aa3e8" stroke-width="1.6"/></g>
<text x="928.8" y="109.6" font-size="9.2" textLength="84.8" lengthAdjust="spacingAndGlyphs" fill="#f2f2f2">ストロークのスタイル(Y)</text>
<text x="754.8" y="135.4" font-size="9.6" textLength="27.6" lengthAdjust="spacingAndGlyphs" fill="#e4e4e4">幅(W):</text>
<path d="M833.3 131.6 H842" stroke="#ededed" stroke-width="1.5"/>
<path d="M845 131.6 H853 M849.0 127.6 V135.6" stroke="#ededed" stroke-width="1.5"/>
<path d="M906.6 130.643 L909.5 133.057 L912.4 130.643" stroke="#ededed" stroke-width="1.5" fill="none" stroke-linecap="round" stroke-linejoin="round"/>
<text x="754.8" y="161.5" font-size="9.6" textLength="20.6" lengthAdjust="spacingAndGlyphs" fill="#e4e4e4">線種:</text>
<path d="M793.4 157.3 H859.8" stroke="#f4f4f4" stroke-width="1.5"/>
<path d="M862.6 156.4605 L865.75 159.0395 L868.9 156.4605" stroke="#ededed" stroke-width="1.5" fill="none" stroke-linecap="round" stroke-linejoin="round"/>
<path d="M907.5 157.5 H915" stroke="#5a5a5a" stroke-width="1.5"/>
<path d="M920 157.5 H928 M924.0 153.5 V161.5" stroke="#ededed" stroke-width="1.5"/>
<text x="754.8" y="189.5" font-size="9.2" textLength="29" lengthAdjust="spacingAndGlyphs" fill="#e4e4e4">マーカー:</text>
<path d="M790 186.6 H817" stroke="#e8e8e8" stroke-width="0.9"/>
<path d="M820.6 185.643 L823.5 188.057 L826.4 185.643" stroke="#ededed" stroke-width="1.5" fill="none" stroke-linecap="round" stroke-linejoin="round"/>
<path d="M840 186.6 H866.5" stroke="#e8e8e8" stroke-width="0.9"/>
<path d="M870.6 185.643 L873.5 188.057 L876.4 185.643" stroke="#ededed" stroke-width="1.5" fill="none" stroke-linecap="round" stroke-linejoin="round"/>
<path d="M888 186.6 H915" stroke="#e8e8e8" stroke-width="0.9"/>
<path d="M918.6 185.643 L921.5 188.057 L924.4 185.643" stroke="#ededed" stroke-width="1.5" fill="none" stroke-linecap="round" stroke-linejoin="round"/>
<text x="754.3" y="219" font-size="9.6" textLength="11.4" lengthAdjust="spacingAndGlyphs" fill="#e4e4e4">角:</text>
<g transform="translate(791.35 207.6) scale(1.07)"><path d="M0 14 V6 Q0 0 6 0 H14 V5.2 H7 Q5.2 5.2 5.2 7 V14 Z" fill="#f2f2f2"/><path d="M7.4 7.6 H14 V8.8 H7.4Z M7.4 10 H9 V14 H7.4Z" fill="#f2f2f2" opacity=".8"/><path d="M2.6 4 V13 M5 2.5 H13" stroke="#555" stroke-width="0.9" stroke-dasharray="1 1"/></g>
<g transform="translate(818.0 207.6) scale(1.07)"><path d="M0 14 V4 L4 0 H14 V5.2 H5.2 V14 Z" fill="#f2f2f2"/><path d="M7.4 7.6 H14 V8.8 H7.4Z M7.4 10 H9 V14 H7.4Z" fill="#f2f2f2" opacity=".8"/><path d="M2.6 4 V13 M5 2.5 H13" stroke="#555" stroke-width="0.9" stroke-dasharray="1 1"/></g>
<g transform="translate(844.75 207.6) scale(1.07)"><path d="M0 14 V0 H14 V5.2 H5.2 V14 Z" fill="#f2f2f2"/><path d="M7.4 7.6 H14 V8.8 H7.4Z M7.4 10.4 H12 V11.6 H7.4Z" fill="#f2f2f2" opacity=".85"/><path d="M5 2.6 H13" stroke="#264f8a" stroke-width="0.9"/></g>
<path d="M905.8 215.4 H914" stroke="#ededed" stroke-width="1.5"/>
<path d="M917.5 215.4 H926 M921.75 211.15 V219.65" stroke="#ededed" stroke-width="1.5"/>
<text x="754.3" y="246" font-size="9.6" textLength="11.4" lengthAdjust="spacingAndGlyphs" fill="#e4e4e4">端:</text>
<g transform="translate(792.85 236)"><rect x="0" y="0" width="3.4" height="11.6" fill="#e9eefc"/><rect x="4.6" y="0" width="2.4" height="11.6" fill="#e9eefc"/><rect x="8.2" y="0" width="3.4" height="11.6" fill="#e9eefc"/></g>
<g transform="translate(819.1 233.8) scale(1.06 1.18)"><path d="M0 13 V6 A6 6 0 0 1 12 6 V13 H8.2 V6.4 A2.2 2.2 0 0 0 3.8 6.4 V13 Z" fill="#f2f2f2"/><path d="M5.4 7 H6.6 V13 H5.4Z" fill="#f2f2f2"/></g>
<g transform="translate(845.85 234.2) scale(1.06 1.18)"><path d="M0 12.6 V0 H12 V12.6 H8.2 V3.8 H3.8 V12.6 Z" fill="#f2f2f2"/><path d="M5.4 5 H6.6 V12.6 H5.4Z" fill="#f2f2f2"/></g>
<text x="754.3" y="272.5" font-size="9.6" textLength="21.4" lengthAdjust="spacingAndGlyphs" fill="#e4e4e4">順番:</text>
<g transform="translate(789.45 260.05)"><path d="M4.6 4.6 H17.8 V9 H9 V16.8 H4.6 Z" fill="#fff"/><rect x="9" y="8.8" width="8.8" height="8" fill="#e6008c"/><circle cx="5.6" cy="5.6" r="5.5" fill="#1ea7e6"/></g>
<g transform="translate(816.1 260.05)"><path d="M4.6 4.6 H17.8 V9 H9 V16.8 H4.6 Z" fill="#fff"/><rect x="7" y="7" width="10.8" height="9.8" fill="#e6008c"/><circle cx="5.6" cy="5.6" r="5.5" fill="#1ea7e6"/></g>
<g transform="translate(842.85 260.05)"><circle cx="5.6" cy="5.6" r="5.5" fill="#1ea7e6"/><path d="M4.6 4.6 H17.8 V9 H9 V16.8 H4.6 Z" fill="#fff"/><rect x="9" y="8.8" width="8.8" height="8" fill="#e6008c"/></g>
<g transform="translate(789.45 286.74999999999994)"><circle cx="5.6" cy="5.6" r="5.5" fill="#1ea7e6"/><path d="M4.6 4.6 H17.8 V9 H9 V16.8 H4.6 Z" fill="#fff"/><rect x="9" y="8.8" width="8.8" height="8" fill="#e6008c"/></g>
<g transform="translate(816.1 286.74999999999994)"><path d="M4.6 4.6 H17.8 V9 H9 V16.8 H4.6 Z" fill="#fff"/><circle cx="5.6" cy="5.6" r="5.5" fill="#1ea7e6"/><rect x="7" y="7" width="10.8" height="9.8" fill="#e6008c"/></g>
<g transform="translate(842.85 286.74999999999994)"><circle cx="5.6" cy="5.6" r="5.5" fill="#1ea7e6"/><path d="M4.6 4.6 H17.8 V9 H9 V16.8 H4.6 Z" fill="#fff"/><rect x="7" y="7" width="10.8" height="9.8" fill="#e6008c"/></g>
<text x="1018" y="465" font-size="27.5" font-weight="bold" textLength="56" lengthAdjust="spacingAndGlyphs" fill="#ffffff">ゼロ</text>
<text x="1082.5" y="465" font-size="16.5" textLength="34" lengthAdjust="spacingAndGlyphs" fill="#f4f4f4">から</text>
<text x="1032" y="487.8" font-size="17" textLength="72.5" lengthAdjust="spacing" fill="#f4f4f4">はじめて</text>
<text x="1108.8" y="488.8" font-size="18.5" font-weight="bold" textLength="113.8" lengthAdjust="spacingAndGlyphs" fill="#ffffff">クリエイター</text>
<g transform="translate(980.5 438) rotate(-12.5) scale(1.08 1)"><text x="0" y="0" font-size="17" textLength="69" lengthAdjust="spacing" fill="#f4f4f4">初期費用</text></g>
<path d="M978.5 441.5 Q992 449 1014 437.6 Q1017.6 435 1019.4 437.8 Q1020 440.6 1017.6 440 Q1015.6 438.6 1018.6 436.4 Q1038 428.6 1058 425.2 Q1066 422.4 1068.6 411" fill="none" stroke="#eaeaea" stroke-width="0.9" stroke-linecap="round"/>
<text x="1105.8" y="550.5" font-size="9.2" textLength="52" lengthAdjust="spacingAndGlyphs" fill="#e4e4e4">ブレンドモード:</text>
<text x="1169.5" y="551" font-size="9.6" textLength="19.4" lengthAdjust="spacingAndGlyphs" fill="#e4e4e4">標準</text>
<path d="M1228.1 546.3605 L1231.25 548.9395 L1234.4 546.3605" stroke="#ededed" stroke-width="1.5" fill="none" stroke-linecap="round" stroke-linejoin="round"/>
<text x="752.2" y="573.5" font-size="9.2" textLength="38" lengthAdjust="spacingAndGlyphs" fill="#e4e4e4">ぼかし (%)</text>
<path d="M1222 569.6 H1230" stroke="#5a5a5a" stroke-width="1.5"/>
<path d="M1231.5 569.6 H1240 M1235.75 565.35 V573.85" stroke="#ededed" stroke-width="1.5"/>
<text x="752.2" y="594.1" font-size="9.6" textLength="56" lengthAdjust="spacingAndGlyphs" fill="#f4f4f4">不透明度 (%)</text>
<path d="M1221.4 590.4 H1229" stroke="#ededed" stroke-width="1.5"/>
<path d="M1232 590.4 H1240 M1236.0 586.4 V594.4" stroke="#5a5a5a" stroke-width="1.5"/>
<g transform="translate(1258.4 76.4)"><path d="M0.7 0.7 H5.6 L8.6 3.7 V10.6 H0.7 Z" fill="none" stroke="#f2f2f2" stroke-width="1.5" stroke-linejoin="round"/><circle cx="8.8" cy="0.6" r="1.4" fill="#3aa53a"/></g>
<g transform="translate(1257.6 100.8)"><path d="M0 1 H4 L5 2.4 H10 V4 H0 Z" fill="#f2f2f2"/><path d="M0 10 L1.6 5 H11.6 L10 10 Z" fill="#f2f2f2"/></g>
<g transform="translate(1258 125.4)"><path d="M5 0 V5 M2.6 3 L5 5.6 L7.4 3" stroke="#3aa53a" stroke-width="1.6" fill="none"/><path d="M0 7 H10 V11 H0 Z" fill="#f2f2f2"/></g>
<g transform="translate(1257.6 150)"><rect x="2.4" y="0" width="6" height="3" fill="#f2f2f2"/><rect x="0" y="3.6" width="10.8" height="4.6" rx="0.8" fill="#f2f2f2"/><rect x="2.4" y="7" width="6" height="3.4" fill="#f2f2f2" stroke="#383838" stroke-width="0.8"/></g>
<g transform="translate(1259.0 177.4)"><path d="M0.7 0.7 H5.6 L8.6 3.7 V10.6 H0.7 Z" fill="none" stroke="#f2f2f2" stroke-width="1.5" stroke-linejoin="round"/><path d="M-2.6 5.4 H4 M2 3.4 L4.2 5.4 L2 7.4" stroke="#3aa53a" stroke-width="1.4" fill="none"/></g>
<g transform="translate(1257.8000000000002 201.1)"><path d="M0.7 0.7 H5.6 L8.6 3.7 V10.6 H0.7 Z" fill="none" stroke="#f2f2f2" stroke-width="1.5" stroke-linejoin="round"/><path d="M5 5.6 H11 M9 3.6 L11.2 5.6 L9 7.6" stroke="#3aa53a" stroke-width="1.4" fill="none"/></g>
<g fill="none" stroke="#f2f2f2" stroke-width="1.5" stroke-linecap="round"><path d="M1259.4 231.4 H1264.2 Q1267 231.4 1267 234.4 Q1267 237.4 1264.2 237.4 H1262"/><path d="M1261.4 229 L1258.8 231.4 L1261.4 233.8"/></g>
<g fill="none" stroke="#f2f2f2" stroke-width="1.5" stroke-linecap="round"><path d="M1266.6 256.4 H1261.8 Q1259 256.4 1259 259.4 Q1259 262.4 1261.8 262.4 H1264"/><path d="M1264.6 254 L1267.2 256.4 L1264.6 258.8"/></g>
<g><rect x="1257.6" y="280.6" width="7" height="7" fill="#f2f2f2"/><rect x="1261.6" y="284.4" width="7" height="7" fill="#bdbdbd" stroke="#383838" stroke-width="0.9"/></g>
<g fill="none" stroke="#f2f2f2" stroke-width="1.3"><path d="M1259.6 305.4 L1265.6 313.4 M1266.4 305.4 L1260.4 313.4"/><circle cx="1259.8" cy="314.8" r="1.9"/><circle cx="1266.2" cy="314.8" r="1.9"/></g>
<g><rect x="1258.4" y="331.4" width="9.2" height="10.4" rx="1" fill="#f2f2f2"/><rect x="1260.8" y="329.8" width="4.4" height="2.6" fill="#cfcfcf"/><rect x="1260.2" y="334" width="5.6" height="6" fill="#9a9a9a"/></g>
<g><circle cx="1262.2" cy="362.2" r="4.6" fill="#f2f2f2"/><path d="M1265.4 365.6 L1268 368.2" stroke="#f2f2f2" stroke-width="1.8" stroke-linecap="round"/><rect x="1259.8" y="360.2" width="4.6" height="3.8" fill="none" stroke="#555" stroke-width="0.8" stroke-dasharray="1 0.8"/></g>
<g><circle cx="1262.2" cy="387.2" r="4.6" fill="#f2f2f2"/><path d="M1265.4 390.6 L1268 393.2" stroke="#f2f2f2" stroke-width="1.8" stroke-linecap="round"/><path d="M1259.6 388.6 L1262.4 385 L1264.6 388.6Z" fill="#666"/></g>
<g><circle cx="1262.2" cy="412.2" r="4.6" fill="#f2f2f2"/><path d="M1265.4 415.6 L1268 418.2" stroke="#f2f2f2" stroke-width="1.8" stroke-linecap="round"/><rect x="1260.2" y="409.4" width="4" height="5.4" fill="#777"/></g>
<g fill="none" stroke="#f2f2f2" stroke-width="1.2"><rect x="1259.6" y="431.6" width="7" height="9.6"/><path d="M1257.4 430.4 H1259.6 M1266.6 430.4 H1268.8 M1257.4 442.6 H1259.6 M1266.6 442.6 H1268.8"/><rect x="1261.8" y="434.6" width="2.6" height="3.4" fill="#f2f2f2"/></g>
<g><rect x="1257.8" y="458.6" width="7" height="7" fill="#f2f2f2"/><rect x="1261.6" y="462.4" width="7" height="7" fill="#23a023"/></g>
<g><rect x="1257.8" y="483.6" width="7" height="7" fill="#f2f2f2"/><rect x="1261.4" y="487.2" width="7" height="7" fill="#383838" stroke="#f2f2f2" stroke-width="1.3"/><rect x="1263.6" y="489.4" width="2.6" height="2.8" fill="#bdbdbd"/></g>
<g><rect x="1257.8" y="508.6" width="7" height="7" fill="none" stroke="#f2f2f2" stroke-width="1.3"/><rect x="1261.4" y="512.2" width="7" height="7" fill="#383838" stroke="#f2f2f2" stroke-width="1.3"/><rect x="1263.6" y="514.4" width="2.6" height="2.8" fill="#bdbdbd"/></g>
<g><circle cx="1262" cy="541" r="2.8" fill="#f2f2f2"/><rect x="1263.4" y="542.2" width="3.6" height="3.4" fill="#cfcfcf"/><path d="M1257.6 538.4 V536.4 H1259.6 M1266.4 536.4 H1268.4 V538.4 M1257.6 545.6 V547.6 H1259.6 M1266.4 547.6 H1268.4 V545.6" stroke="#3aa53a" stroke-width="1.1" fill="none"/></g>
<g><circle cx="1262.4" cy="566" r="2.8" fill="#f2f2f2"/><rect x="1263.6" y="567" width="3.2" height="3" fill="#cfcfcf"/><path d="M1257.6 560.6 L1260 563 M1268.4 560.6 L1266 563 M1257.6 571.6 L1260 569.2 M1268.4 571.6 L1266 569.2" stroke="#cfcfcf" stroke-width="1.2" fill="none"/></g>
<path d="M1260.1999999999998 589.443 L1263.1 591.857 L1266.0 589.443" stroke="#ededed" stroke-width="1.5" fill="none" stroke-linecap="round" stroke-linejoin="round"/>
<path d="M1254.1999999999998 617.111 L1257.5 619.7890000000001 L1260.8000000000002 617.111" stroke="#5c5c5c" stroke-width="1.5" fill="none" stroke-linecap="round" stroke-linejoin="round"/>
<path d="M1253.6 616.6 L1257.5 620.4 L1261.4 616.6" stroke="#363636" stroke-width="2.2" fill="none"/>
<path d="M1253.6 620.4 L1257.5 616.6 L1261.4 620.4" stroke="#5c5c5c" stroke-width="1.5" fill="none" stroke-linecap="round" stroke-linejoin="round"/>
<path d="M1254.1999999999998 636.511 L1257.5 639.1890000000001 L1260.8000000000002 636.511" stroke="#5c5c5c" stroke-width="1.5" fill="none" stroke-linecap="round" stroke-linejoin="round"/>
<path d="M1268 633.6 H1277 M1268 637.4 H1277 M1268 641.2 H1277" stroke="#f2f2f2" stroke-width="1.6"/>
<path d="M3.5 611 L40.5 647 M40.5 611 L3.5 647" stroke="#b3123f" stroke-width="3.8" stroke-linecap="round"/>
<circle cx="187.2" cy="640" r="6.2" fill="none" stroke="#c9a0ee" stroke-width="1.3"/>
<circle cx="231.4" cy="640" r="3.6" fill="#f6c9d4"/>
<text x="16.2" y="663.3" font-size="9" textLength="21.2" lengthAdjust="spacingAndGlyphs" fill="#e4e4e4">フィル:</text>
<text x="0.4" y="677.3" font-size="9" textLength="37" lengthAdjust="spacingAndGlyphs" fill="#e4e4e4">ストローク:</text>
<path d="M157 665.2 H165" stroke="#ededed" stroke-width="1.5"/>
<path d="M168 665.2 H176 M172.0 661.2 V669.2" stroke="#5a5a5a" stroke-width="1.5"/>
<g><path d="M236 667.4 Q241 661.8 246 667.4 Q241 672.6 236 667.4 Z" fill="none" stroke="#f2f2f2" stroke-width="1.4"/><circle cx="241" cy="667.2" r="1.7" fill="#f2f2f2"/><path d="M237.4 663 L238.6 664.4 M244.6 663 L243.4 664.4 M241 661.6 V663" stroke="#f2f2f2" stroke-width="1"/></g>
<g><rect x="261.6" y="665.6" width="7.6" height="5.8" rx="0.6" fill="#f4f4f4"/><path d="M266.6 665.6 V664 Q266.6 662 268.6 662 Q270.6 662 270.6 664 V664.8" fill="none" stroke="#f4f4f4" stroke-width="1.3"/></g>
<text x="283" y="669.7" font-size="9.6" font-weight="bold" textLength="19.2" lengthAdjust="spacingAndGlyphs" fill="#f2f2f2">矩形</text>
<text x="308.4" y="669.6" font-size="9.2" textLength="392.4" lengthAdjust="spacingAndGlyphs" fill="#e4e4e4">所属: レイヤー Layer 1. 選択オブジェクトのクリックで拡大縮小ハンドル/回転ハンドルが切り替わります.</text>
<path d="M1168 666 H1177" stroke="#ededed" stroke-width="1.5"/>
<path d="M1180 666 H1189 M1184.5 661.5 V670.5" stroke="#ededed" stroke-width="1.5"/>
<path d="M1252 666 H1260" stroke="#ededed" stroke-width="1.5"/>
<path d="M1263 666 H1272 M1267.5 661.5 V670.5" stroke="#ededed" stroke-width="1.5"/>
<path d="M90.6 165.4 L94.4 171.6 L92.9 171.2 L92.4 172.6 Z" fill="#111"/>
</svg>
</div>
</body></html>
